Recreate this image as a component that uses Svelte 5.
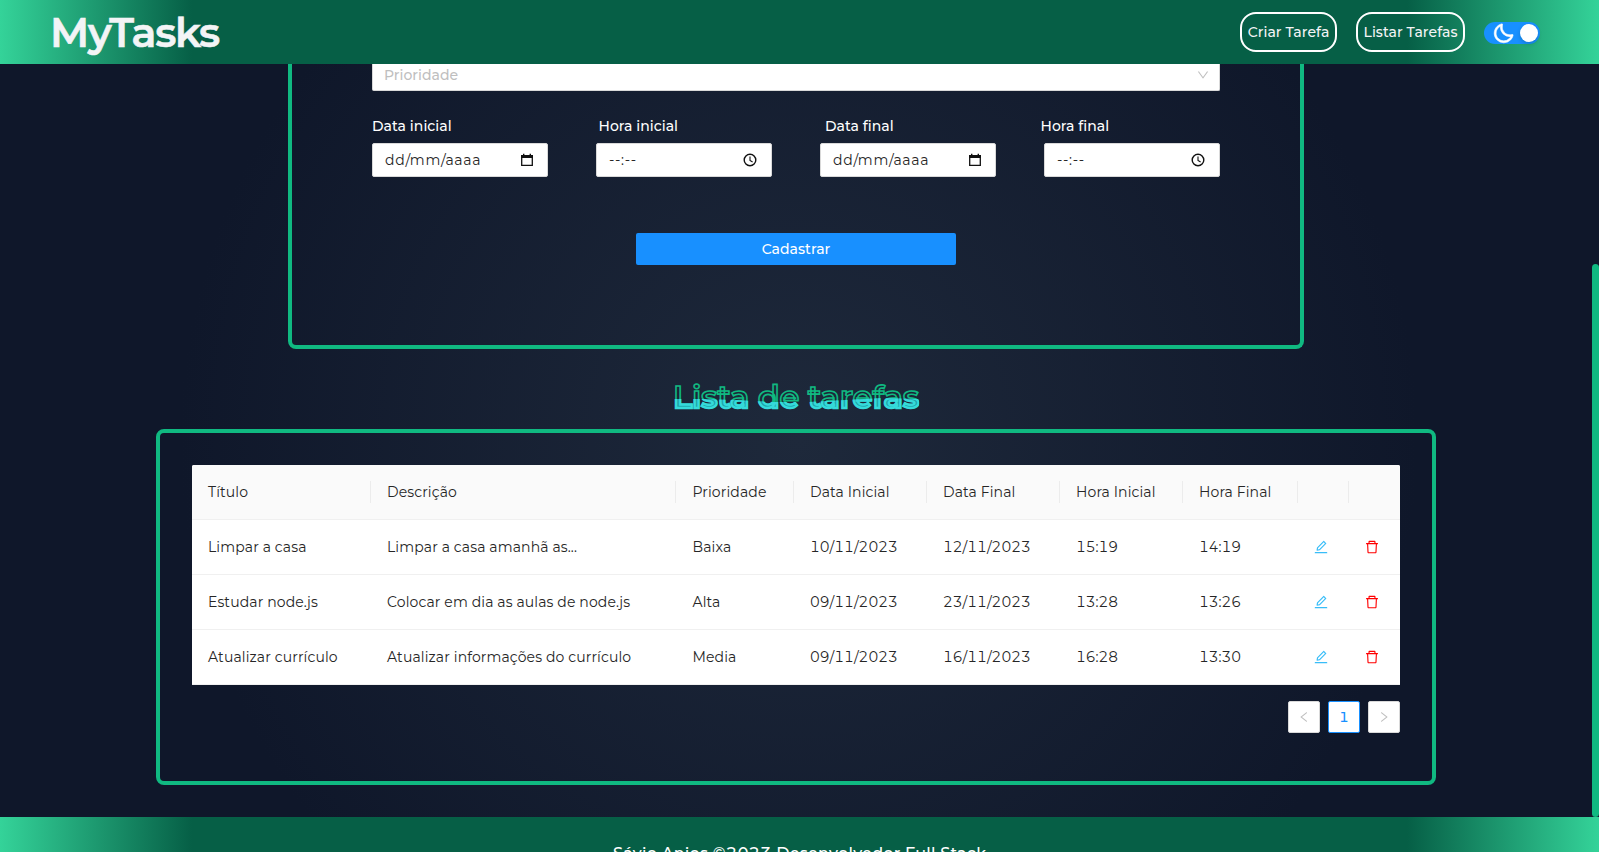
<script>
  const columns = ['Título', 'Descrição', 'Prioridade', 'Data Inicial', 'Data Final', 'Hora Inicial', 'Hora Final', '', ''];
  const tasks = [
    ['Limpar a casa', 'Limpar a casa amanhã as...', 'Baixa', '10/11/2023', '12/11/2023', '15:19', '14:19'],
    ['Estudar node.js', 'Colocar em dia as aulas de node.js', 'Alta', '09/11/2023', '23/11/2023', '13:28', '13:26'],
    ['Atualizar currículo', 'Atualizar informações do currículo', 'Media', '09/11/2023', '16/11/2023', '16:28', '13:30']
  ];
  const fields = [
    { kind: 'date', text: 'dd/mm/aaaa' },
    { kind: 'time', text: '--:--' },
    { kind: 'date', text: 'dd/mm/aaaa' },
    { kind: 'time', text: '--:--' }
  ];
  const labels = ['Data inicial', 'Hora inicial', 'Data final', 'Hora final'];

  const editPath = 'M257.7 752c2 0 4-.2 6-.5L431.9 722c2-.4 3.9-1.3 5.3-2.8l423.9-423.9a9.96 9.96 0 000-14.1L694.9 114.9c-1.9-1.9-4.4-2.9-7.1-2.9s-5.2 1-7.1 2.9L256.8 538.8c-1.5 1.5-2.4 3.3-2.8 5.3l-29.5 168.2a33.5 33.5 0 009.4 29.8c6.6 6.4 14.9 9.9 23.8 9.9zm67.4-174.4L687.8 215l73.3 73.3-362.7 362.6-88.9 15.7 15.6-89zM880 836H144c-17.7 0-32 14.3-32 32v36c0 4.4 3.6 8 8 8h784c4.4 0 8-3.6 8-8v-36c0-17.7-14.3-32-32-32z';
  const trashPath = 'M360 184h-8c4.4 0 8-3.6 8-8v8h304v-8c0 4.4 3.6 8 8 8h-8v72h72v-80c0-35.3-28.7-64-64-64H352c-35.3 0-64 28.7-64 64v80h72v-72zm504 72H160c-17.7 0-32 14.3-32 32v32c0 4.4 3.6 8 8 8h60.4l24.7 523c1.6 34.1 29.8 61 63.9 61h454c34.2 0 62.3-26.8 63.9-61l24.7-523H888c4.4 0 8-3.6 8-8v-32c0-17.7-14.3-32-32-32zM731.3 840H292.7l-24.2-512h487l-24.2 512z';
  const downPath = 'M884 256h-75c-5.1 0-9.9 2.5-12.9 6.6L512 654.2 227.9 262.6c-3-4.1-7.8-6.6-12.9-6.6h-75c-6.5 0-10.3 7.4-6.5 12.7l352.6 486.1c12.8 17.6 39 17.6 51.7 0l352.6-486.1c3.9-5.3.1-12.7-6.4-12.7z';
  const leftPath = 'M724 218.3V141c0-6.7-7.7-10.4-12.9-6.3L260.3 486.8a31.86 31.86 0 000 50.3l450.8 352.1c5.3 4.1 12.9.4 12.9-6.3v-77.3c0-4.9-2.3-9.6-6.1-12.6l-360-281 360-281.1c3.8-3 6.1-7.7 6.1-12.6z';
  const rightPath = 'M765.7 486.8L314.9 134.7A7.97 7.97 0 00302 141v77.3c0 4.9 2.3 9.6 6.1 12.6l360 281.1-360 281.1c-3.9 3-6.1 7.7-6.1 12.6V883c0 6.7 7.7 10.4 12.9 6.3l450.8-352.1a31.96 31.96 0 000-50.4z';

  // Tracks a heading so that it spans the given width.
  function track(node, width) {
    const natural = node.getBoundingClientRect().width;
    node.style.letterSpacing = `${(width - natural) / node.textContent.length}px`;
  }
</script>

{#snippet icon(d, size, color)}
  <svg width={size} height={size} viewBox="64 64 896 896" fill={color}><path {d} /></svg>
{/snippet}

<div class="page">
  <header>
    <h1><span class="run" use:track={169}>MyTasks</span></h1>
    <nav>
      <button class="pill criar">Criar Tarefa</button>
      <button class="pill listar">Listar Tarefas</button>
      <div class="switch">
        <svg width="23" height="23" viewBox="0 0 24 24" fill="#fff" stroke="#fff" stroke-width=".6"><path d="M20.742 13.045a8.088 8.088 0 0 1-2.077.271c-2.135 0-4.14-.83-5.646-2.336a8.025 8.025 0 0 1-2.064-7.723A1 1 0 0 0 9.73 2.034a10.014 10.014 0 0 0-4.489 2.582c-3.898 3.898-3.898 10.243 0 14.143a9.937 9.937 0 0 0 7.072 2.93 9.93 9.93 0 0 0 7.07-2.929 10.007 10.007 0 0 0 2.583-4.491 1.001 1.001 0 0 0-1.224-1.224zm-2.772 4.301a7.947 7.947 0 0 1-5.656 2.343 7.953 7.953 0 0 1-5.658-2.344c-3.118-3.119-3.118-8.195 0-11.314a7.923 7.923 0 0 1 2.06-1.483 10.027 10.027 0 0 0 2.89 7.848 9.972 9.972 0 0 0 7.848 2.891 8.036 8.036 0 0 1-1.484 2.059z" /></svg>
        <i></i>
      </div>
    </nav>
  </header>

  <main>
    <section class="form">
      <div class="select">
        <span>Prioridade</span>
        {@render icon(downPath, 12, '#bfbfbf')}
      </div>
      <div class="labels">
        {#each labels as text}<span>{text}</span>{/each}
      </div>
      <div class="fields">
        {#each fields as field}
          <div class="field">
            <span>{field.text}</span>
            {#if field.kind === 'date'}
              <svg class="date" width="14" height="14" viewBox="0 0 14 14"><path d="M1.7 2.7h10.6v9.6H1.7z" fill="none" stroke="#111" stroke-width="1.3" /><path d="M1 2h12v3H1zM3 .7h1.4V3H3zM9.6.7H11V3H9.6z" fill="#111" /></svg>
            {:else}
              <svg width="14" height="14" viewBox="0 0 14 14" fill="none" stroke="#111"><circle cx="7" cy="7" r="5.8" stroke-width="1.4" /><path d="M7 3.6v3.8l2.6 1.6" stroke-width="1.1" /></svg>
            {/if}
          </div>
        {/each}
      </div>
      <button class="submit">Cadastrar</button>
    </section>

    <h2>
      <span class="run outline" use:track={246}>Lista de tarefas</span>
      <span class="run wave" aria-hidden="true" use:track={246}>Lista de tarefas</span>
    </h2>

    <section class="list">
      <div class="table">
        <div class="row head">
          {#each columns as text}<div class="cell">{text}</div>{/each}
        </div>
        {#each tasks as task}
          <div class="row">
            {#each task as text, i}<div class="cell" class:digits={i > 2}>{text}</div>{/each}
            <div class="cell">{@render icon(editPath, 14, '#38bdf8')}</div>
            <div class="cell">{@render icon(trashPath, 14, '#ff0000')}</div>
          </div>
        {/each}
      </div>
      <div class="pagination">
        <button>{@render icon(leftPath, 12, '#bfbfbf')}</button>
        <button class="current">1</button>
        <button>{@render icon(rightPath, 12, '#bfbfbf')}</button>
      </div>
    </section>
  </main>

  <footer>Sávio Anjos ©2023 Desenvolvedor Full Stack</footer>
  <div class="thumb"></div>
</div>

<style>
  :global(body) { margin: 0; overflow: hidden; }
  .page {
    position: relative; width: 1599px; height: 852px; overflow: hidden;
    display: flex; flex-direction: column;
    font: 14px/22px Montserrat, Inter, sans-serif; color: #262626;
    font-variant-numeric: tabular-nums; font-feature-settings: 'tnum';
    letter-spacing: .12px;
  }
  .page * { box-sizing: border-box; }
  .run { white-space: pre; display: inline-block; }
  svg { display: block; flex: none; }
  button { font: inherit; font-feature-settings: inherit; letter-spacing: inherit; padding: 0; margin: 0; }
  header, footer {
    flex: none;
    background: linear-gradient(90deg, #34d399 0, #065f46 12%, #065f46 88%, #34d399 100%);
  }
  header {
    height: 64px; display: flex; align-items: center; justify-content: space-between;
    padding: 0 59px 0 50px;
  }
  h1 {
    margin: 0; font-size: 41px; line-height: 62px; font-weight: 600; letter-spacing: 0;
    color: #f3f4f6; -webkit-text-stroke: .6px #f3f4f6;
  }
  nav { display: flex; align-items: center; }
  .pill {
    height: 40px; border: 2px solid #fff; border-radius: 16px; background: none;
    color: #f3f4f6; font-weight: 500; letter-spacing: .06px; white-space: nowrap;
  }
  .criar { width: 97px; margin-right: 19px; }
  .listar { width: 109px; margin-right: 19px; }
  .switch {
    width: 56px; height: 22px; border-radius: 11px; background: #1890ff; margin-top: 2px;
    display: flex; align-items: center; justify-content: space-between; padding: 0 2px 0 8px;
  }
  .switch svg { margin-top: 1px; }
  .switch i { width: 18px; height: 18px; border-radius: 50%; background: #fff; box-shadow: 0 2px 4px rgba(0, 35, 11, .2); }

  main {
    height: 753px; flex: none; display: flex; flex-direction: column; align-items: center;
    padding-right: 7px;
    background: radial-gradient(circle at 799px 50%, #1e293b 0, #0f172a 70%);
  }
  .form {
    width: 1016px; height: 285px; flex: none; border: 4px solid #10b981; border-top: 0; border-radius: 0 0 8px 8px;
    padding: 0 80px; display: flex; flex-direction: column;
  }
  .select {
    height: 27px; background: #fff; border: 1px solid #d9d9d9; border-top: 0; border-radius: 0 0 2px 2px;
    display: flex; align-items: center; justify-content: space-between; padding: 0 10px 4px 11px;
    color: #bfbfbf; font-weight: 500; letter-spacing: .02px;
  }
  .labels {
    display: grid; grid-template-columns: 226.5px 226.5px 215.5px auto; margin-top: 24px; height: 22px;
    color: #fff; font-weight: 500; letter-spacing: .05px;
  }
  .fields { display: grid; grid-template-columns: repeat(4, 176px); gap: 48px; margin-top: 6px; }
  .field {
    height: 34px; background: #fff; border: 1px solid #d9d9d9; border-radius: 2px; letter-spacing: .7px;
    display: flex; align-items: center; justify-content: space-between; padding: 0 14.5px 0 12px;
  }
  .field .date { margin-right: -1.5px; }
  .submit {
    width: 320px; height: 32px; margin: 56px auto 0; border: 0; border-radius: 2px;
    background: #1890ff; color: #fff; font-weight: 500; letter-spacing: .05px;
  }
  h2 {
    position: relative; margin: 0; height: 80px; flex: none; width: 246px; letter-spacing: 0;
    font-size: 32px; line-height: 96px; font-weight: 600; white-space: nowrap; color: transparent;
  }
  .outline { -webkit-text-stroke: 1.6px #10b981; }
  .wave {
    position: absolute; left: 0; top: 0; color: #1fa3a8; -webkit-text-stroke: 2.4px #35dada;
    clip-path: polygon(0 50px, 12% 50px, 25% 51px, 40% 53px, 55% 53px, 70% 51px, 85% 49px, 100% 50px, 100% 100%, 0 100%);
  }
  .list {
    width: 1280px; height: 356px; flex: none; border: 4px solid #10b981; border-radius: 8px;
    padding: 32px; display: flex; flex-direction: column;
  }
  .table { background: #fff; border-radius: 2px 2px 0 0; overflow: hidden; flex: none; }
  .row {
    display: grid; grid-template-columns: 179px 305px 118px 133px 133px 123px 115px 51px 51px;
    height: 55px; border-bottom: 1px solid #f0f0f0; align-items: center;
  }
  .head { background: #fafafa; }
  .cell { padding-left: 16px; display: flex; align-items: center; height: 22px; white-space: nowrap; }
  .cell:nth-child(3) { padding-left: 16.5px; }
  .digits { letter-spacing: 0; }
  .head .cell:not(:last-child) { border-right: 1px solid #ececec; }
  .pagination { display: flex; justify-content: flex-end; gap: 8px; margin-top: 16px; }
  .pagination button {
    width: 32px; height: 32px; border: 1px solid #d9d9d9; border-radius: 2px; background: #fff;
    display: grid; place-items: center;
  }
  .pagination .current { border-color: #1890ff; color: #1890ff; font-weight: 500; }
  footer {
    height: 35px; padding: 24px 0 0 613px; font-size: 16px; line-height: 25px; font-weight: 500;
    letter-spacing: .25px; color: #fff; overflow: hidden; white-space: nowrap;
  }
  .thumb { position: absolute; right: 0; top: 264px; width: 7px; height: 553px; border-radius: 4px; background: #10b981; }
</style>
